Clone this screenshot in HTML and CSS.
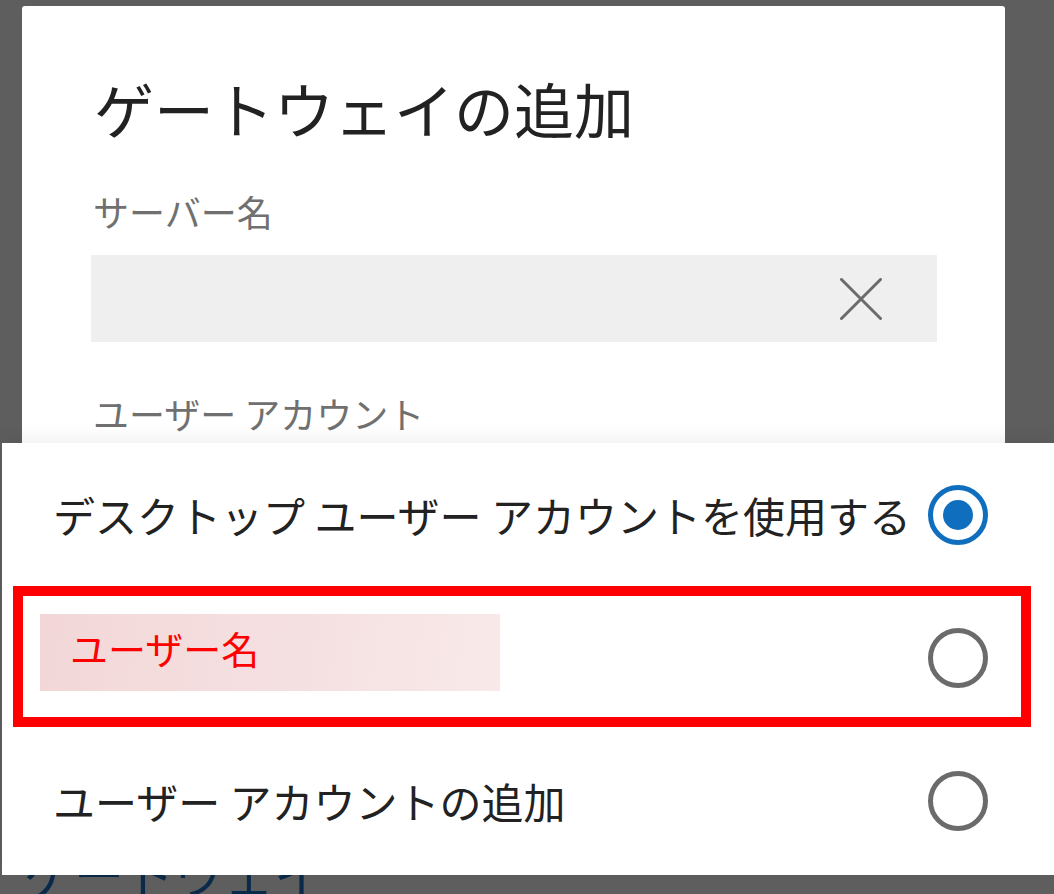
FILE: index.html
```html
<!DOCTYPE html>
<html lang="ja">
<head>
<meta charset="utf-8">
<title>ゲートウェイの追加</title>
<link rel="stylesheet" href="styles.css">
</head>
<body>
<div class="page">
  <div class="page-heading">ゲートウェイ</div>
</div>

<div class="dialog">
  <h1 class="dialog-title">ゲートウェイの追加</h1>
  <div class="field-label">サーバー名</div>
  <div class="input">
    <svg class="clear-icon" width="42" height="42" viewBox="0 0 42 42" aria-hidden="true">
      <path d="M1.5 1.5 L40.5 40.5 M40.5 1.5 L1.5 40.5" stroke="#6b6b6b" stroke-width="3" stroke-linecap="round" fill="none"/>
    </svg>
  </div>
  <div class="field-label field-label-2">ユーザー アカウント</div>
</div>

<div class="sheet">
  <div class="row">
    <span class="row-text">デスクトップ ユーザー アカウントを使用する</span>
    <span class="radio radio-on"><span class="radio-dot"></span></span>
  </div>
  <div class="row">
    <span class="redacted">ユーザー名</span>
    <span class="radio"></span>
  </div>
  <div class="row">
    <span class="row-text">ユーザー アカウントの追加</span>
    <span class="radio"></span>
  </div>
  <div class="annotation"></div>
</div>
</body>
</html>
```

FILE: styles.css
```css
html, body {
  margin: 0;
  padding: 0;
}

body {
  width: 1054px;
  height: 894px;
  overflow: hidden;
  position: relative;
  background: #5e5e5e;
  font-family: "Noto Sans CJK JP", "Noto Sans", sans-serif;
}

.page {
  padding: 842px 0 0 24px;
}

.page-heading {
  font-size: 50px;
  line-height: 60px;
  color: #0b2a4a;
  white-space: nowrap;
}

.dialog {
  position: absolute;
  left: 22px;
  top: 6px;
  width: 983px;
  height: 470px;
  box-sizing: border-box;
  background: #ffffff;
  border-radius: 3px 3px 0 0;
  padding: 66px 68px 0 69px;
}

.dialog-title {
  margin: 0 0 0 3px;
  font-size: 60px;
  line-height: 72px;
  font-weight: 400;
  color: #222222;
}

.field-label {
  margin: 46px 0 0 2px;
  font-size: 36px;
  line-height: 42px;
  color: #707070;
}

.field-label-2 {
  margin-top: 50px;
}

.input {
  margin-top: 23px;
  height: 87px;
  background: #efefef;
  display: flex;
  align-items: center;
  justify-content: flex-end;
  padding-right: 55px;
}

.sheet {
  position: absolute;
  left: 2px;
  right: 0;
  top: 443px;
  height: 432px;
  background: #ffffff;
  box-shadow: 0 -6px 16px rgba(0, 0, 0, 0.06);
  display: flex;
  flex-direction: column;
}

.row {
  height: 143px;
  display: flex;
  align-items: center;
  justify-content: space-between;
  padding: 0 66px 0 51px;
}

.row-text {
  font-size: 42px;
  line-height: 50px;
  color: #222222;
  white-space: nowrap;
}

.redacted {
  margin-left: -13px;
  margin-top: -10px;
  width: 430px;
  height: 77px;
  padding: 0 0 10px 30px;
  box-sizing: border-box;
  width: 460px;
  display: flex;
  align-items: center;
  font-size: 38px;
  line-height: 46px;
  color: #ff0000;
  background: linear-gradient(100deg, #f3d7d8 0%, #f5e0e1 55%, #f9e9e9 100%);
}

.radio {
  width: 60px;
  height: 60px;
  box-sizing: border-box;
  border: 5px solid #6b6b6b;
  border-radius: 50%;
  display: flex;
  align-items: center;
  justify-content: center;
}

.radio-on {
  border-color: #106ebe;
}

.radio-dot {
  width: 30px;
  height: 30px;
  border-radius: 50%;
  background: #106ebe;
}

.annotation {
  position: absolute;
  left: 11px;
  top: 143px;
  width: 1018px;
  height: 141px;
  box-sizing: border-box;
  border: 10px solid #ff0000;
}
```
